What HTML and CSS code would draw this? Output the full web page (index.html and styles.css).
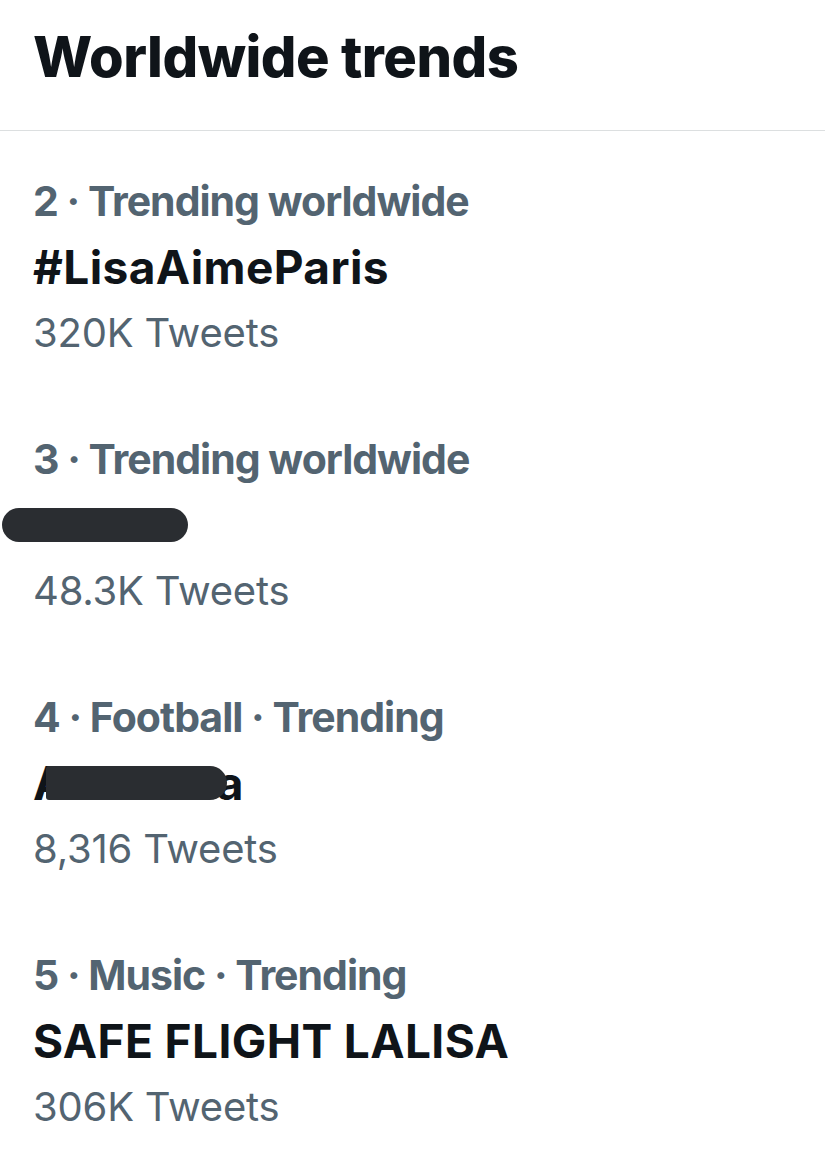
FILE: index.html
```html
<!DOCTYPE html>
<html>
<head>
<meta charset="utf-8">
<link rel="stylesheet" href="styles.css">
</head>
<body>
<div class="page">
  <header class="header">
    <h1 class="title">Worldwide trends</h1>
  </header>
  <ul class="trends">
    <li class="trend">
      <div class="context">2 · Trending worldwide</div>
      <div class="name">#LisaAimeParis</div>
      <div class="count">320K Tweets</div>
    </li>
    <li class="trend">
      <div class="context">3 · Trending worldwide</div>
      <div class="name"><span class="blob blob-a"></span></div>
      <div class="count">48.3K Tweets</div>
    </li>
    <li class="trend">
      <div class="context">4 · Football · Trending</div>
      <div class="name"><span class="peek">A</span><span class="blob blob-b"></span><span class="peek peek-end">a</span></div>
      <div class="count">8,316 Tweets</div>
    </li>
    <li class="trend">
      <div class="context">5 · Music · Trending</div>
      <div class="name">SAFE FLIGHT LALISA</div>
      <div class="count">306K Tweets</div>
    </li>
  </ul>
</div>
</body>
</html>
```
FILE: styles.css
```css
html, body {
  margin: 0;
  padding: 0;
  background: #ffffff;
}
body {
  font-family: Inter, "Liberation Sans", Arial, sans-serif;
  color: #0f1419;
}
.page {
  width: 825px;
}
.header {
  height: 130px;
  border-bottom: 1px solid #dcdfe0;
  padding: 0 33px;
  display: flex;
  align-items: flex-start;
}
.title {
  margin: 0;
  font-size: 56px;
  font-weight: 800;
  line-height: 114px;
  letter-spacing: -0.5px;
}
.trends {
  list-style: none;
  margin: 0;
  padding: 0;
}
.trend {
  padding: 37px 33px 23px;
}
.context {
  font-size: 41px;
  font-weight: 700;
  color: #536471;
  line-height: 66px;
  letter-spacing: -1px;
  white-space: nowrap;
}
.name {
  font-size: 46px;
  font-weight: 700;
  line-height: 66px;
  height: 66px;
  letter-spacing: 0.4px;
  display: flex;
  align-items: center;
  white-space: nowrap;
}
.count {
  font-size: 40px;
  font-weight: 400;
  color: #536471;
  line-height: 66px;
  letter-spacing: -0.2px;
}
.blob {
  display: inline-block;
  background: #2a2d31;
  border-radius: 17px;
}
.blob-a {
  width: 186px;
  height: 34px;
  margin-left: -31px;
}
.blob-b {
  width: 181px;
  height: 34px;
  margin-left: -22px;
  border-radius: 3px 17px 17px 3px;
  position: relative;
  z-index: 1;
}
.peek {
  color: #0f1419;
}
.peek-end {
  margin-left: -10px;
}
```
